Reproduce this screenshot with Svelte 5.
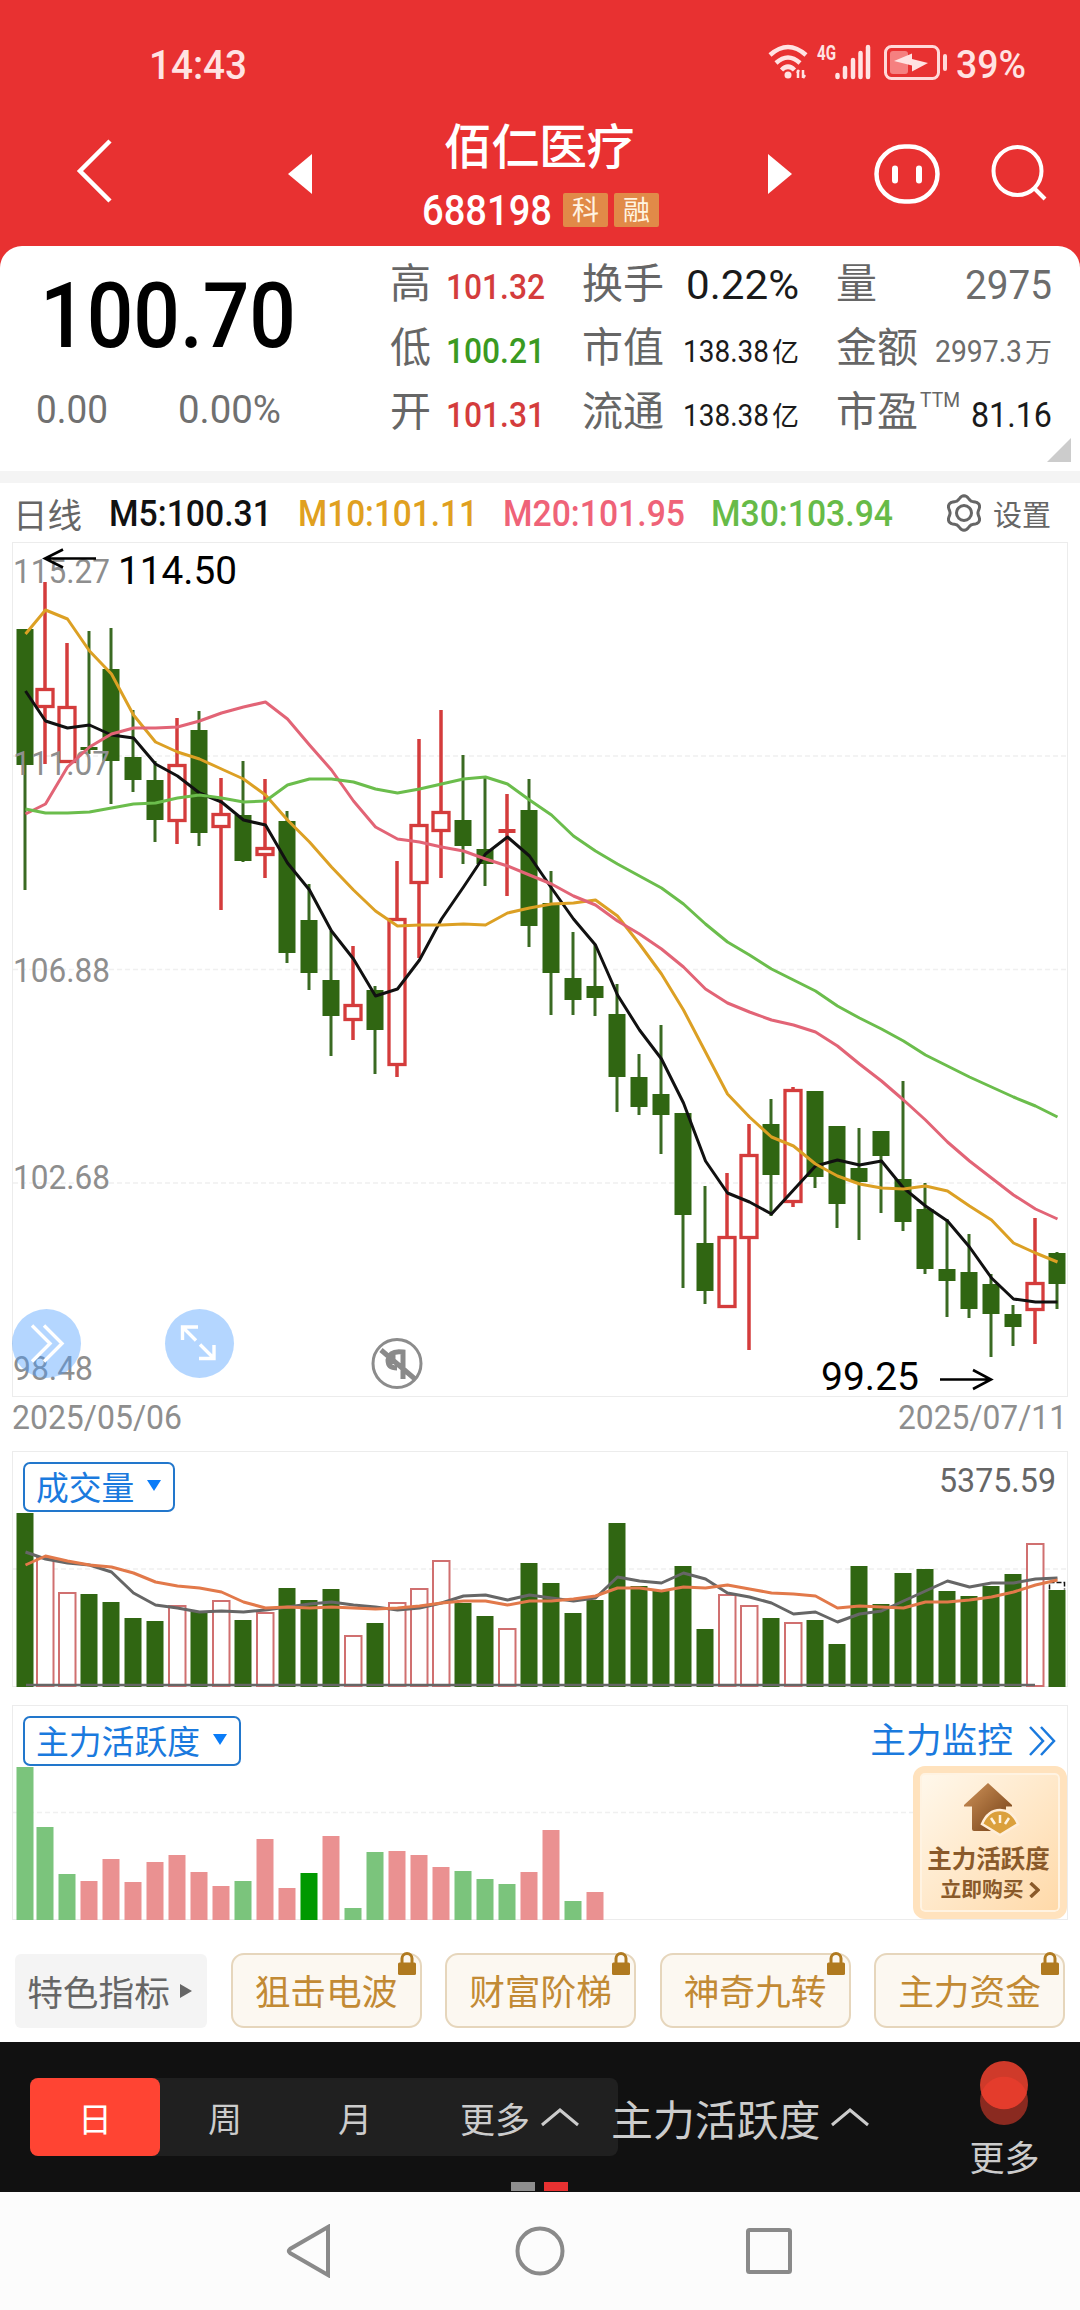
<script lang="ts">
  type Candle = [high: number, top: number, bottom: number, low: number, up?: number]
  type Figure = {text: string, w: number, h: number}

  const barWidth = 17
  const chartTop = 542

  function cx(i: number): number {
    return i === 0 ? 25 : 23 + i * 22
  }

  function line(ys: number[]): string {
    return ys.map((y, i) => `${cx(i) + 0.5},${y}`).join(' ')
  }

  // six-lobed outline, one lobe pointing up
  function gearPoints(): string {
    return Array.from({length: 72}).map((_, i) => {
      const a = i * Math.PI / 36
      const r = 15.6 + 1.7 * Math.cos(6 * a)
      return `${(19 + r * Math.sin(a)).toFixed(1)},${(19 - r * Math.cos(a)).toFixed(1)}`
    }).join(' ')
  }

  const candles: Candle[] = [
    [629, 629, 765, 890], [582, 688, 708, 764, 1], [643, 706, 763, 763, 1], [631, 747, 750, 754],
    [628, 669, 761, 804], [710, 757, 780, 792], [761, 780, 820, 842], [718, 764, 822, 844, 1],
    [711, 730, 833, 846], [778, 813, 828, 910, 1], [761, 815, 861, 862], [779, 847, 856, 878, 1],
    [811, 821, 953, 963], [884, 920, 973, 990], [931, 980, 1016, 1056], [946, 1004, 1021, 1040, 1],
    [986, 990, 1030, 1074], [861, 918, 1066, 1077, 1], [739, 824, 884, 958, 1], [710, 811, 832, 878, 1],
    [755, 820, 846, 864], [777, 849, 864, 886], [794, 829, 833, 896, 1], [779, 810, 926, 947],
    [871, 903, 973, 1015], [932, 978, 1000, 1015], [945, 986, 998, 1016], [984, 1014, 1077, 1112],
    [1054, 1077, 1107, 1115], [1025, 1094, 1115, 1154], [1113, 1113, 1215, 1288], [1186, 1243, 1291, 1304],
    [1173, 1236, 1308, 1308, 1], [1124, 1154, 1239, 1350, 1], [1099, 1124, 1175, 1216], [1087, 1089, 1203, 1207, 1],
    [1091, 1091, 1177, 1188], [1126, 1126, 1204, 1228], [1128, 1168, 1182, 1240], [1131, 1131, 1156, 1213],
    [1081, 1179, 1222, 1231], [1183, 1209, 1269, 1274], [1219, 1269, 1281, 1317], [1234, 1272, 1309, 1318],
    [1274, 1284, 1314, 1357], [1305, 1314, 1327, 1346], [1218, 1282, 1311, 1344, 1], [1252, 1253, 1284, 1309],
  ]

  const ma5 = [691, 721, 728, 725, 735, 738, 764, 776, 793, 802, 820, 825, 863, 890, 931, 959, 996, 989, 960, 919, 887, 854, 837, 856, 888, 919, 945, 995, 1030, 1059, 1103, 1161, 1193, 1202, 1214, 1190, 1166, 1160, 1165, 1161, 1188, 1206, 1221, 1247, 1278, 1299, 1302, 1302]
  const ma10 = [634, 610, 619, 651, 674, 715, 742, 752, 759, 769, 779, 795, 820, 842, 867, 890, 911, 926, 925, 925, 924, 925, 913, 908, 904, 903, 900, 916, 944, 974, 1010, 1052, 1094, 1117, 1137, 1146, 1164, 1176, 1184, 1188, 1189, 1186, 1191, 1206, 1220, 1243, 1253, 1262]
  const ma20 = [814, 804, 767, 747, 734, 728, 728, 727, 721, 713, 707, 702, 719, 745, 770, 801, 827, 839, 842, 847, 851, 859, 866, 875, 884, 896, 905, 921, 934, 949, 967, 989, 1003, 1012, 1020, 1025, 1032, 1046, 1064, 1081, 1100, 1120, 1142, 1161, 1178, 1195, 1209, 1219]
  const ma30 = [809, 813, 813, 812, 808, 804, 803, 798, 795, 798, 802, 801, 785, 779, 779, 782, 789, 793, 789, 784, 779, 777, 784, 800, 815, 836, 851, 864, 876, 888, 904, 924, 942, 955, 969, 980, 991, 1006, 1018, 1029, 1041, 1055, 1066, 1077, 1087, 1097, 1106, 1117]

  const volumes = [1513, 1557, 1592, 1594, 1602, 1618, 1621, 1605, 1612, 1600, 1620, 1612, 1588, 1600, 1589, 1635, 1623, 1602, 1588, 1560, 1603, 1616, 1628, 1563, 1583, 1613, 1600, 1523, 1586, 1591, 1566, 1629, 1594, 1605, 1618, 1622, 1620, 1644, 1566, 1604, 1573, 1569, 1591, 1596, 1586, 1574, 1543, 1590]
  const vol5 = [1552, 1559, 1563, 1565, 1572, 1593, 1605, 1608, 1612, 1611, 1612, 1610, 1607, 1604, 1602, 1605, 1607, 1610, 1608, 1603, 1596, 1595, 1600, 1595, 1598, 1601, 1598, 1577, 1581, 1583, 1573, 1579, 1593, 1597, 1603, 1614, 1612, 1622, 1614, 1611, 1601, 1591, 1581, 1587, 1583, 1583, 1579, 1578]
  const vol10 = [1565, 1556, 1561, 1565, 1567, 1573, 1582, 1586, 1588, 1592, 1602, 1608, 1607, 1608, 1607, 1608, 1609, 1608, 1606, 1603, 1601, 1601, 1605, 1601, 1601, 1599, 1596, 1588, 1588, 1591, 1587, 1588, 1585, 1589, 1593, 1594, 1596, 1608, 1606, 1607, 1608, 1602, 1602, 1600, 1597, 1592, 1585, 1580]

  // g = outflow, r = inflow, d = signal day
  const activity: [number, 'g' | 'r' | 'd'][] = [
    [1767, 'g'], [1827, 'g'], [1874, 'g'], [1881, 'r'], [1859, 'r'], [1882, 'r'], [1862, 'r'], [1855, 'r'], [1872, 'r'],
    [1886, 'r'], [1881, 'g'], [1839, 'r'], [1888, 'r'], [1873, 'd'], [1836, 'r'], [1908, 'g'], [1852, 'g'], [1851, 'r'],
    [1855, 'r'], [1867, 'r'], [1871, 'g'], [1879, 'g'], [1884, 'g'], [1872, 'r'], [1830, 'r'], [1901, 'g'], [1892, 'r'],
  ]

  const axis = [
    {text: '115.27', y: 583, w: 97},
    {text: '111.07', y: 775, w: 97},
    {text: '106.88', y: 982, w: 97},
    {text: '102.68', y: 1189, w: 97},
    {text: '98.48', y: 1380, w: 80},
  ]

  const stats: {label: string, sup?: string, unit?: string, tone: string, value: Figure}[] = [
    {label: '高', tone: 'rise', value: {text: '101.32', w: 99, h: 25.5}},
    {label: '换手', tone: 'dark', value: {text: '0.22%', w: 113, h: 29.5}},
    {label: '量', tone: 'grey', value: {text: '2975', w: 87, h: 29.5}},
    {label: '低', tone: 'fall', value: {text: '100.21', w: 99, h: 25.5}},
    {label: '市值', unit: '亿', tone: 'dark', value: {text: '138.38', w: 86, h: 22}},
    {label: '金额', unit: '万', tone: 'grey', value: {text: '2997.3', w: 87, h: 22}},
    {label: '开', tone: 'rise', value: {text: '101.31', w: 99, h: 25.5}},
    {label: '流通', unit: '亿', tone: 'dark', value: {text: '138.38', w: 86, h: 22}},
    {label: '市盈', sup: 'TTM', tone: 'dark', value: {text: '81.16', w: 81, h: 25.5}},
  ]

  const averages: (Figure & {cls: string})[] = [
    {text: 'M5:100.31', w: 163, h: 26, cls: 'm5'},
    {text: 'M10:101.11', w: 180, h: 26, cls: 'm10'},
    {text: 'M20:101.95', w: 182, h: 26, cls: 'm20'},
    {text: 'M30:103.94', w: 182, h: 26, cls: 'm30'},
  ]

  const locked = ['狙击电波', '财富阶梯', '神奇九转', '主力资金']
  const periods = ['日', '周', '月']
  let period = $state('日')
</script>

<!-- digits fitted to a fixed width, h is the cap height -->
{#snippet fig(text: string, w: number, h: number)}
  <svg class="fig" width={w} height={h}>
    <text x="0" y={h} font-size={h / 0.711} textLength={w} lengthAdjust="spacingAndGlyphs">{text}</text>
  </svg>
{/snippet}

{#snippet chevronUp()}
  <svg class="chev" width="40" height="20" viewBox="0 0 40 20"><path d="M2 18 20 3 38 18" /></svg>
{/snippet}

<div class="app">
  <header>
    <div class="status">
      <div class="clock">{@render fig('14:43', 98, 29)}</div>
      <svg class="wifi" width="44" height="36" viewBox="0 0 44 36">
        <path d="M2 11Q20-5 38 11M8 19Q20 8 32 19M13.500 26Q20 19.500 26.500 26" />
        <circle cx="20" cy="31" r="3.500" />
        <path class="arrows" d="M30 26V34M29 29 31 26M35 34V26M37 31 35 34" />
      </svg>
      <div class="net">{@render fig('4G', 19, 14)}</div>
      <svg width="36" height="36" viewBox="0 0 36 36">
        <path class="signal" d="M2.500 31V33M10 24V33M18 16V33M25.500 9V33M33 3V33" />
      </svg>
      <svg class="battery" width="64" height="36" viewBox="0 0 64 36">
        <rect x="1.500" y="1.500" width="53" height="32" rx="6" />
        <rect class="charge" x="6" y="6" width="18" height="23" rx="3" />
        <path class="bolt" d="M10 16 28 8.500V14L44 18 28 26.500V20.500Z" />
        <path class="cap" d="M61 11V24" />
      </svg>
      <div class="percent">{@render fig('39%', 70, 27)}</div>
    </div>
    <div class="titlebar">
      <svg class="back" width="40" height="66" viewBox="0 0 40 66"><path d="M35 3 5 33 35 63" /></svg>
      <svg class="prev" width="24" height="40" viewBox="0 0 24 40"><path d="M24 0V40L0 20Z" /></svg>
      <div class="stock">
        <div class="name">佰仁医疗</div>
        <div class="code">
          {@render fig('688198', 130, 30)}
          <span class="tag">科</span>
          <span class="tag">融</span>
        </div>
      </div>
      <svg class="next" width="24" height="40" viewBox="0 0 24 40"><path d="M0 0V40L24 20Z" /></svg>
      <svg class="face" width="66" height="60" viewBox="0 0 66 60">
        <rect x="2.500" y="2.500" width="61" height="55" rx="28" />
        <path d="M21 24.500V36.500M45 24.500V36.500" />
      </svg>
      <svg class="search" width="58" height="58" viewBox="0 0 58 58">
        <circle cx="26.500" cy="26" r="24" />
        <path d="M43 43 54 54" />
      </svg>
    </div>
  </header>

  <section class="quote">
    <div class="last">
      <div class="price">{@render fig('100.70', 256, 64)}</div>
      <div class="change">
        {@render fig('0.00', 72, 27)}
        {@render fig('0.00%', 103, 27)}
      </div>
    </div>
    <div class="stats">
      {#each stats as s}
        <div class="stat">
          <span class="label">{s.label}</span>
          {#if s.sup}<span class="sup">{@render fig(s.sup, 40, 14.5)}</span>{/if}
          <span class="value {s.tone}">
            {@render fig(s.value.text, s.value.w, s.value.h)}
            {#if s.unit}<span class="unit">{s.unit}</span>{/if}
          </span>
        </div>
      {/each}
    </div>
    <svg class="corner" width="24" height="24"><path d="M24 0V24H0Z" /></svg>
  </section>

  <section class="averages">
    <span class="kline">日线</span>
    {#each averages as a}
      <span class="avg {a.cls}">{@render fig(a.text, a.w, a.h)}</span>
    {/each}
    <svg class="gear" width="38" height="38" viewBox="0 0 38 38">
      <polygon points={gearPoints()} />
      <circle cx="19" cy="19" r="7.500" />
    </svg>
    <span class="settings">设置</span>
  </section>

  <svg class="kchart" width="1080" height="902" viewBox="0 {chartTop} 1080 902">
    <rect class="frame" x="12.500" y="542.500" width="1055" height="854" />
    <path class="grid" d="M13 756H1067M13 969.500H1067M13 1183H1067" />

    {#each candles as [high, top, bottom, low, up], i}
      {@const x = cx(i)}
      {#if up}
        <path class="upWick" d="M{x} {high}V{top}M{x} {bottom}V{low}" />
        {#if bottom - top < 5}
          <rect class="upFlat" x={x - 8.5} y={top} width={barWidth} height={bottom - top} />
          <path class="upWick" d="M{x} {top}V{bottom}" />
        {:else}
          <rect class="upBody" x={x - 8} y={top + 1.5} width="16" height={bottom - top - 3} />
        {/if}
      {:else}
        <path class="downWick" d="M{x} {high}V{low}" />
        <rect class="downBody" x={x - 8.5} y={top} width={barWidth} height={bottom - top} />
      {/if}
    {/each}

    {#each axis as a}
      <text class="axisText" x="13" y={a.y} textLength={a.w} lengthAdjust="spacingAndGlyphs">{a.text}</text>
    {/each}

    <polyline class="ma m5" points={line(ma5)} />
    <polyline class="ma m10" points={line(ma10)} />
    <polyline class="ma m20" points={line(ma20)} />
    <polyline class="ma m30" points={line(ma30)} />

    <path class="pointer" d="M96 558.500H45M63 549.500 45 558.500 63 567.500" />
    <text class="mark" x="118" y="583.500" textLength="119" lengthAdjust="spacingAndGlyphs">114.50</text>
    <text class="mark" x="821" y="1390" textLength="98" lengthAdjust="spacingAndGlyphs">99.25</text>
    <path class="pointer" d="M940 1379.500H991M973 1370 991 1379.500 973 1389" />

    <circle class="tool" cx="46.500" cy="1343.500" r="34.500" />
    <path class="toolIcon" d="M32 1325.500 50 1343.500 32 1361.500M44 1325.500 62 1343.500 44 1361.500" />
    <circle class="tool" cx="199.500" cy="1343.500" r="34.500" />
    <path class="toolIcon" d="M198 1327H182.500V1340M182.500 1327 196 1340.500M200 1344.500 214 1358.500M214 1345V1358.500H199" />
    <circle class="logoRing" cx="397" cy="1363.500" r="24" />
    <path class="logoMark" d="M403 1379V1352Q390 1350 388 1360Q388 1368 397 1368M393 1354V1364M381 1350 415 1379" />

    <text class="axisText" x="12" y="1429" textLength="170" lengthAdjust="spacingAndGlyphs">2025/05/06</text>
    <text class="axisText" x="898" y="1429" textLength="169" lengthAdjust="spacingAndGlyphs">2025/07/11</text>
  </svg>

  <div class="panel volume">
    <svg width="1080" height="240" viewBox="0 1450 1080 240">
      <rect class="frame" x="12.500" y="1451.500" width="1055" height="235" />
      <path class="grid" d="M13 1569H1067" />
      {#each volumes as top, i}
        {#if candles[i][4]}
          <rect class="volUp" x={cx(i) - 8} y={top + 1} width="16.500" height={1685 - top} />
        {:else}
          <rect class="downBody" x={cx(i) - 8.5} y={top} width={barWidth} height={1687 - top} />
        {/if}
      {/each}
      <path class="volBase" d="M26 1685H1035" />
      <path class="forecast" d="M1049.500 1589.500V1582.500H1064.500V1589.500" />
      <polyline class="vma slow" points={line(vol5)} />
      <polyline class="vma fast" points={line(vol10)} />
    </svg>
    <div class="overlay">
      <button class="picker">成交量<svg width="14" height="12"><path d="M0 0H14L7 11Z" /></svg></button>
      <span class="maxVol">{@render fig('5375.59', 117, 24)}</span>
    </div>
  </div>

  <div class="panel activity">
    <svg width="1080" height="217" viewBox="0 1704 1080 217">
      <rect class="frame" x="12.500" y="1705.500" width="1055" height="214" />
      <path class="grid" d="M13 1812.500H1067" />
      {#each activity as [top, kind], i}
        <rect class="act {kind}" x={cx(i) - 8.5} y={top} width={barWidth} height={1920 - top} />
      {/each}
    </svg>
    <div class="overlay">
      <button class="picker">主力活跃度<svg width="14" height="12"><path d="M0 0H14L7 11Z" /></svg></button>
      <div class="right">
        <div class="monitor">
          主力监控
          <svg width="28" height="30" viewBox="0 0 28 30"><path d="M2 1 15 15 2 29M13 1 26 15 13 29" /></svg>
        </div>
        <div class="promo">
          <svg width="60" height="56" viewBox="0 0 60 56">
            <defs>
              <linearGradient id="roof" x1="0" y1="0" x2="1" y2="1">
                <stop offset="0" stop-color="#cf935a" />
                <stop offset="1" stop-color="#713d13" />
              </linearGradient>
            </defs>
            <path fill="url(#roof)" d="M28 2 52 24V25.500H46V50H14Q12 50 12 48V25.500H4V24Z" />
            <path class="fan" d="M40 54 22 43Q28 29 40 29T58 43Z" />
            <path class="ribs" d="M31 37 35 43M40 34V42M49 37 45 43" />
          </svg>
          <strong>主力活跃度</strong>
          <b>立即购买<svg width="11" height="16"><path d="M1.500 1 9 8 1.500 15" /></svg></b>
        </div>
      </div>
    </div>
  </div>

  <div class="features">
    <div class="more">特色指标<svg width="12" height="14"><path d="M0 0V14L12 7Z" /></svg></div>
    {#each locked as name}
      <div class="feature">
        {name}
        <svg class="lock" width="20" height="24" viewBox="0 0 20 24">
          <path d="M5 11V6.500A5 5 0 0 1 15 6.500V11" />
          <rect x="1" y="10.500" width="18" height="12.500" rx="1.500" />
        </svg>
      </div>
    {/each}
  </div>

  <div class="toolbar">
    <div class="segments">
      {#each periods as p}
        <button class:active={p === period} onclick={() => period = p}>{p}</button>
      {/each}
      <div class="moreSeg">更多{@render chevronUp()}</div>
    </div>
    <div class="indicator">主力活跃度{@render chevronUp()}</div>
    <div class="moreTool">
      <svg width="50" height="66" viewBox="0 0 50 66">
        <circle class="shadow" cx="25" cy="41" r="24" />
        <circle class="ball" cx="25" cy="25" r="24" />
        <path class="lens" d="M2.300 33A24 24 0 0 0 47.700 33A24 24 0 0 0 2.300 33Z" />
      </svg>
      更多
    </div>
    <div class="dots"><i></i><i class="on"></i></div>
  </div>

  <nav>
    <svg width="48" height="54" viewBox="0 0 48 54"><path d="M43 3V51L5 29Q2.500 27 5 25Z" /></svg>
    <svg width="50" height="50" viewBox="0 0 50 50"><circle cx="25" cy="25" r="22.500" /></svg>
    <svg width="46" height="46" viewBox="0 0 46 46"><rect x="2" y="2" width="42" height="42" rx="1.500" /></svg>
  </nav>
</div>

<style>
  :global(body) {
    margin: 0;
    background: #e83131;
  }
  .app {
    width: 1080px;
    height: 2310px;
    overflow: hidden;
    display: flex;
    flex-direction: column;
    background: #fff;
    font-family: Roboto, "Noto Sans CJK SC", sans-serif;
    color: #666;
  }
  svg {
    display: block;
    flex: none;
    fill: none;
  }
  .fig {
    overflow: visible;
  }
  .fig text {
    fill: currentColor;
    font-family: Roboto, sans-serif;
  }
  button {
    font: inherit;
    border: none;
    background: none;
    padding: 0;
  }

  header {
    height: 268px;
    background: #e83131;
    color: #fff;
  }
  .status {
    height: 80px;
    padding-left: 149px;
    display: flex;
    align-items: flex-end;
    color: #ffe3e3;
    font-weight: 500;
  }
  .clock {
    width: 619px;
    padding-bottom: 1px;
  }
  .wifi {
    stroke: #ffe3e3;
    stroke-width: 4.5;
  }
  .wifi circle {
    fill: #ffe3e3;
    stroke: none;
  }
  .wifi .arrows {
    stroke-width: 2.5;
  }
  .net {
    align-self: flex-start;
    padding: 46px 0 0 5px;
    margin-right: -1px;
    font-weight: 700;
  }
  .signal {
    stroke: #ffe3e3;
    stroke-width: 4.5;
    stroke-linecap: round;
  }
  .battery {
    margin-left: 13px;
    margin-bottom: -1px;
  }
  .battery rect {
    stroke: #ffd9d9;
    stroke-width: 3;
  }
  .battery .charge {
    fill: #f58080;
    stroke: none;
  }
  .battery .bolt {
    fill: #ffe3e3;
  }
  .battery .cap {
    stroke: #ffd9d9;
    stroke-width: 4;
    stroke-linecap: round;
  }
  .percent {
    padding: 0 0 2px 8px;
  }
  .titlebar {
    height: 166px;
    display: flex;
    align-items: flex-start;
  }
  .titlebar svg {
    stroke: #fff;
    stroke-width: 4.5;
  }
  .titlebar .back {
    margin: 58px 0 0 75px;
  }
  .titlebar .prev, .titlebar .next {
    fill: #fff;
    stroke: none;
    margin-top: 74px;
  }
  .titlebar .prev {
    margin-left: 173px;
  }
  .stock {
    width: 456px;
    padding-top: 34px;
    display: flex;
    flex-direction: column;
    align-items: center;
  }
  .stock .name {
    font-size: 48px;
    line-height: 68px;
    font-weight: 500;
    letter-spacing: -0.5px;
    margin-left: -2px;
  }
  .stock .code {
    height: 34px;
    padding: 11px 0 0 1px;
    display: flex;
    align-items: center;
    gap: 6px;
    font-weight: 500;
  }
  .titlebar .fig {
    stroke: none;
    margin-right: 5px;
  }
  .tag {
    width: 45px;
    height: 34px;
    border-radius: 2px;
    background: #e18a48;
    font-size: 27px;
    line-height: 36px;
    font-weight: 400;
    text-align: center;
    color: #fff4e2;
  }
  .titlebar .face {
    margin: 64px 0 0 82px;
  }
  .titlebar .face path {
    stroke-width: 6;
    stroke-linecap: round;
  }
  .titlebar .search {
    margin: 65px 0 0 51px;
    stroke-width: 4;
  }

  .quote {
    position: relative;
    height: 225px;
    margin-top: -22px;
    display: flex;
    background: #fff;
    border-radius: 22px 22px 0 0;
  }
  .last {
    width: 390px;
  }
  .price {
    padding: 37px 0 0 40px;
    color: #000;
    font-weight: 500;
  }
  .change {
    padding: 49px 0 0 36px;
    display: flex;
    gap: 70px;
    color: #707070;
  }
  .stats {
    padding-top: 6px;
    display: grid;
    grid-template-columns: 155px 217px 216px;
    grid-auto-rows: 64px;
    column-gap: 37px;
  }
  .stat {
    display: flex;
    align-items: baseline;
  }
  .stat .label {
    font-size: 41px;
    line-height: 64px;
    color: #666;
  }
  .stat .sup {
    position: relative;
    top: -20px;
    margin-left: 2px;
  }
  .stat .value {
    margin-left: auto;
    display: flex;
    align-items: baseline;
  }
  .unit {
    font-size: 27px;
    line-height: 30px;
    margin-left: 3px;
  }
  .value.rise {
    color: #d43c3c;
    font-weight: 500;
  }
  .value.fall {
    color: #3a9a22;
    font-weight: 500;
  }
  .dark {
    color: #1a1a1a;
  }
  .grey {
    color: #6c6c6c;
  }
  .corner {
    position: absolute;
    right: 9px;
    bottom: 9px;
    fill: #ccc;
  }

  .averages {
    height: 59px;
    border-top: 12px solid #f4f4f4;
    padding-left: 13px;
    display: flex;
    align-items: center;
    font-weight: 500;
  }
  .kline {
    width: 96px;
    font-size: 34.5px;
    font-weight: 400;
  }
  .avg {
    margin-right: 25.5px;
    color: #111;
  }
  .avg.m10 {
    color: #e0a020;
  }
  .avg.m20 {
    color: #ef6378;
  }
  .avg.m30 {
    color: #67bb48;
  }
  .gear {
    margin-left: 27px;
    margin-right: 10px;
    stroke: #666;
    stroke-width: 3;
    stroke-linejoin: round;
  }
  .settings {
    font-size: 29px;
    font-weight: 400;
  }

  .frame {
    stroke: #ececec;
  }
  .grid {
    stroke: #f0f0f0;
    stroke-width: 1.5;
    stroke-dasharray: 5 3;
  }
  .upWick, .upBody {
    stroke: #d43c3c;
    stroke-width: 3.5;
  }
  .upBody {
    stroke-width: 3.3;
    fill: #fff;
  }
  .upFlat {
    fill: #d43c3c;
  }
  .downWick {
    stroke: #3a6a22;
    stroke-width: 3;
  }
  .downBody {
    fill: #306612;
  }
  .ma {
    stroke: #111;
    stroke-width: 3;
    stroke-linejoin: round;
  }
  .ma.m10 {
    stroke: #dca024;
  }
  .ma.m20 {
    stroke: #e26476;
  }
  .ma.m30 {
    stroke: #6bbd4c;
  }
  .axisText {
    font-family: Roboto, sans-serif;
    font-size: 33.5px;
    fill: #8e8e8e;
  }
  .mark {
    font-family: Roboto, sans-serif;
    font-size: 39.5px;
    fill: #000;
  }
  .pointer {
    stroke: #000;
    stroke-width: 2.6;
  }
  .tool {
    fill: #4a9cff;
    fill-opacity: 0.41;
  }
  .toolIcon {
    stroke: #fff;
    stroke-width: 3.4;
  }
  .logoRing {
    stroke: #8c8c8c;
    stroke-width: 3;
  }
  .logoMark {
    stroke: #8a8a8a;
    stroke-width: 5;
  }

  .panel {
    position: relative;
  }
  .volume {
    margin-top: 6px;
    height: 240px;
  }
  .activity {
    margin-top: 14px;
    height: 217px;
  }
  .volUp {
    stroke: #d07070;
    stroke-width: 2;
    fill: #fff;
  }
  .volBase {
    stroke: #666;
    stroke-width: 2.6;
  }
  .forecast {
    stroke: #111;
    stroke-width: 1.5;
    stroke-dasharray: 5 2;
    fill: #fff;
  }
  .vma {
    stroke-width: 3;
    stroke-linejoin: round;
  }
  .vma.slow {
    stroke: #666;
  }
  .vma.fast {
    stroke: #e2794a;
  }
  .act.g {
    fill: #7bc47c;
  }
  .act.r {
    fill: #ea9191;
  }
  .act.d {
    fill: #009900;
  }
  .overlay {
    position: absolute;
    inset: 12px 13px 0 23px;
    display: flex;
    justify-content: space-between;
    align-items: flex-start;
  }
  .picker {
    height: 50px;
    padding: 4px 12px 0 11px;
    border: 2px solid #2277cc;
    border-radius: 7px;
    background: #fff;
    display: flex;
    align-items: center;
    gap: 13px;
    font-size: 32.8px;
    line-height: 46px;
    color: #1a7ade;
  }
  .picker svg {
    fill: #0a7cf8;
    margin-top: -6px;
  }
  .maxVol {
    padding: 6px 11px 0 0;
  }
  .right {
    display: flex;
    flex-direction: column;
    align-items: flex-end;
  }
  .monitor {
    height: 50px;
    padding-right: 11px;
    display: flex;
    align-items: center;
    gap: 15px;
    font-size: 35.7px;
    line-height: 50px;
    color: #1a7ade;
  }
  .monitor svg {
    stroke: #1a7ade;
    stroke-width: 2.5;
  }
  .promo {
    box-sizing: border-box;
    width: 154px;
    height: 153px;
    border: 7px solid #ffe2bd;
    border-radius: 12px;
    box-shadow: inset 0 0 0 2px #fff3e2;
    background: linear-gradient(135deg, #fff8ec, #ffd9a8);
    display: flex;
    flex-direction: column;
    align-items: center;
    padding-top: 8px;
    color: #8a5a2a;
  }
  .promo strong {
    font-size: 24.5px;
    line-height: 33px;
    margin: 6px 0 0 -3px;
  }
  .promo b {
    font-size: 20.8px;
    line-height: 24px;
    margin-top: 2px;
    display: flex;
    align-items: center;
    gap: 5px;
  }
  .promo b svg {
    stroke: #8a5a2a;
    stroke-width: 3.5;
  }
  .fan {
    fill: #dba03c;
    stroke: #ffeeda;
    stroke-width: 2.5;
  }
  .ribs {
    stroke: #fff3e0;
    stroke-width: 2.5;
  }

  .features {
    height: 121px;
    padding: 0 15px;
    display: flex;
    align-items: flex-start;
    justify-content: space-between;
    font-size: 35.7px;
  }
  .more {
    box-sizing: border-box;
    width: 192px;
    height: 74px;
    margin-top: 33px;
    padding: 0 3px 1px 0;
    border-radius: 6px;
    background: #f4f4f4;
    display: flex;
    align-items: center;
    justify-content: center;
    gap: 10px;
  }
  .more svg {
    fill: #666;
  }
  .feature {
    position: relative;
    box-sizing: border-box;
    width: 191px;
    height: 75px;
    margin-top: 32px;
    border: 2px solid #e6d6bc;
    border-radius: 13px;
    background: #fcf8f1;
    color: #c28a34;
    line-height: 77px;
    text-align: center;
  }
  .lock {
    position: absolute;
    top: -3px;
    right: 3px;
  }
  .lock path {
    stroke: #b07a20;
    stroke-width: 3;
  }
  .lock rect {
    fill: #b07a20;
  }

  .toolbar {
    position: relative;
    height: 150px;
    display: flex;
    align-items: flex-start;
    padding-left: 30px;
    background: #111;
    color: #ccc;
  }
  .segments {
    width: 588px;
    height: 78px;
    margin-top: 36px;
    border-radius: 8px;
    background: #202020;
    display: flex;
    font-size: 35px;
  }
  .segments button {
    width: 130px;
    border-radius: 8px;
    color: #ccc;
    font-size: 34px;
  }
  .segments .active {
    background: #ff4433;
    color: #fff;
  }
  .moreSeg, .indicator {
    display: flex;
    align-items: center;
    gap: 10px;
  }
  .moreSeg {
    margin-left: 40px;
  }
  .chev {
    stroke: #ccc;
    stroke-width: 3;
  }
  .indicator {
    height: 78px;
    margin: 36px 0 0 -7px;
    font-size: 41.9px;
  }
  .moreTool {
    margin: 18px 0 0 99px;
    display: flex;
    flex-direction: column;
    align-items: center;
    font-size: 35px;
    line-height: 62px;
  }
  .moreTool svg {
    margin-bottom: 3px;
  }
  .shadow {
    fill: #8a2a20;
  }
  .ball {
    fill: #cf3a2a;
  }
  .lens {
    fill: #e43c2c;
  }
  .dots {
    position: absolute;
    left: 511px;
    bottom: 1px;
    display: flex;
    gap: 9px;
  }
  .dots i {
    width: 24px;
    height: 9px;
    background: #8e8e8e;
  }
  .dots .on {
    background: #e83131;
  }

  nav {
    flex: 1;
    padding: 0 288px 0 285px;
    display: flex;
    align-items: center;
    justify-content: space-between;
    background: #fcfcfc;
  }
  nav svg {
    stroke: #8a8a8a;
    stroke-width: 4;
  }
</style>
